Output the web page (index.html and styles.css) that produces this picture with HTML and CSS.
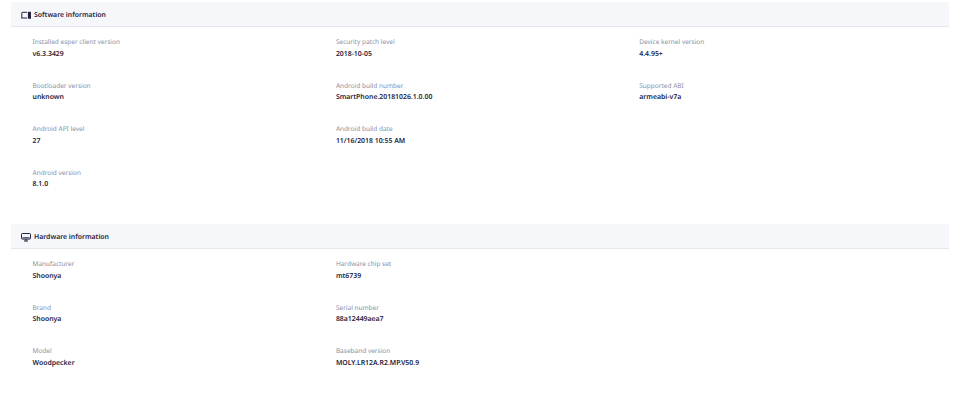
FILE: index.html
```html
<!DOCTYPE html>
<html lang="en">
<head>
<meta charset="utf-8">
<title>Device information</title>
<link rel="stylesheet" href="styles.css">
</head>
<body>
<section class="section">
  <h2 class="head">
    <svg class="icon" viewBox="0 0 10 9" aria-hidden="true"><path class="line" d="M6 1.3H1.3a.5.5 0 0 0-.5.5V6.8M0 7h6"/><rect class="fill" x="6.9" y=".8" width="3.1" height="6.9" rx=".5"/></svg>
    Software information
  </h2>
  <div class="grid">
    <div class="item"><span class="label">Installed esper client version</span><span class="value">v6.3.3429</span></div>
    <div class="item"><span class="label">Security patch level</span><span class="value">2018-10-05</span></div>
    <div class="item"><span class="label">Device kernel version</span><span class="value">4.4.95+</span></div>
    <div class="item"><span class="label">Bootloader version</span><span class="value">unknown</span></div>
    <div class="item"><span class="label">Android build number</span><span class="value">SmartPhone.20181026.1.0.00</span></div>
    <div class="item"><span class="label">Supported ABI</span><span class="value">armeabi-v7a</span></div>
    <div class="item"><span class="label">Android API level</span><span class="value">27</span></div>
    <div class="item"><span class="label">Android build date</span><span class="value">11/16/2018 10:55 AM</span></div>
    <div class="item empty"></div>
    <div class="item"><span class="label">Android version</span><span class="value">8.1.0</span></div>
  </div>
</section>
<section class="section">
  <h2 class="head">
    <svg class="icon" viewBox="0 0 10 9" aria-hidden="true"><rect class="line" x=".5" y=".5" width="9" height="5.6" rx=".8"/><path class="line" d="M3 8h4M5 6v2"/><path class="line" d="M1.5 4.8h7"/></svg>
    Hardware information
  </h2>
  <div class="grid">
    <div class="item"><span class="label">Manufacturer</span><span class="value">Shoonya</span></div>
    <div class="item"><span class="label">Hardware chip set</span><span class="value">mt6739</span></div>
    <div class="item empty"></div>
    <div class="item"><span class="label">Brand</span><span class="value">Shoonya</span></div>
    <div class="item"><span class="label">Serial number</span><span class="value">88a12449aea7</span></div>
    <div class="item empty"></div>
    <div class="item"><span class="label">Model</span><span class="value">Woodpecker</span></div>
    <div class="item"><span class="label">Baseband version</span><span class="value">MOLY.LR12A.R2.MP.V50.9</span></div>
  </div>
</section>
</body>
</html>
```

FILE: styles.css
```css
* { box-sizing: border-box; }
html, body { height: 100%; }
body {
  margin: 0;
  padding: 2px 11px 0;
  background: #fff;
  font-family: "Noto Sans", sans-serif;
  color: #1e2340;
  text-rendering: geometricPrecision;
}
.section { margin-bottom: 13px; }
.head {
  display: flex;
  align-items: center;
  gap: 3px;
  height: 25px;
  margin: 0;
  padding: 2px 0 0 10px;
  background: #f6f7fa;
  border-bottom: 1px solid #e6e8ee;
  font-size: 6.9px;
  font-weight: 600;
}
.icon { width: 10px; height: 9px; flex: none; }
.line { fill: none; stroke: #1e2340; stroke-width: 1; }
.fill { fill: #1e2340; }
.grid {
  display: grid;
  grid-template-columns: repeat(3, 303.4px);
  grid-auto-rows: 43.5px;
  padding: 10px 0 0 21.5px;
}
.item { display: flex; flex-direction: column; gap: 3.5px; }
.label { font-size: 6.5px; line-height: 9px; color: #8a90a6; }
.value { font-size: 6.9px; line-height: 10px; font-weight: 600; }
```
